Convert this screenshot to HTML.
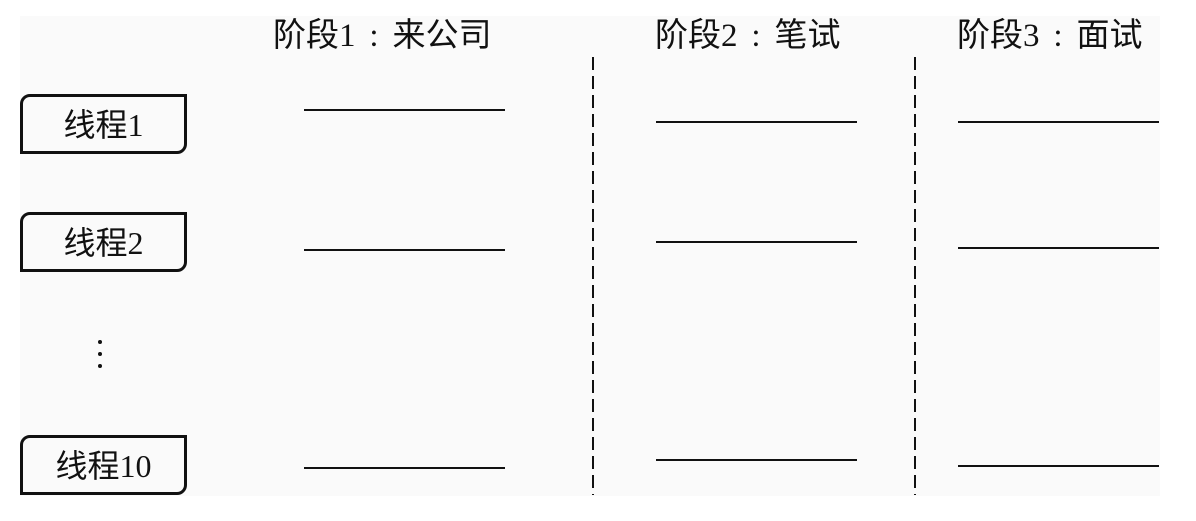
<!DOCTYPE html>
<html><head><meta charset="utf-8"><style>
body{margin:0;width:1196px;height:521px;background:#fff;position:relative;overflow:hidden;font-family:"Liberation Serif","Noto Sans CJK SC",serif;color:#111}
.panel{position:absolute;left:20px;top:16px;width:1140px;height:480px;background:#fafafa}
.h{position:absolute;top:16px;font-size:33px;line-height:40px;white-space:nowrap;font-family:"Liberation Serif","Noto Sans CJK SC",serif}
.c{display:inline-block;width:37px;text-align:center}
.box{position:absolute;left:20px;width:161px;height:54px;border:3px solid #111;border-radius:10px 0 10px 0;font-size:32px;line-height:56px;text-align:center;background:#fafafa}
.ln{position:absolute;height:2px;background:#111;width:201px}
.dash{position:absolute;top:57px;height:438px;width:2px;background:repeating-linear-gradient(to bottom,#111 0 13px,transparent 13px 19px)}
.dot{position:absolute;left:98px;width:4px;height:4px;border-radius:50%;background:#111}
</style></head><body>
<div class="panel"></div>
<div class="h" style="left:273px">阶段1<span class="c">:</span>来公司</div>
<div class="h" style="left:655px">阶段2<span class="c">:</span>笔试</div>
<div class="h" style="left:957px">阶段3<span class="c">:</span>面试</div>
<div class="box" style="top:94px">线程1</div>
<div class="box" style="top:212px">线程2</div>
<div class="box" style="top:435px">线程10</div>
<div class="dot" style="top:340px"></div>
<div class="dot" style="top:352px"></div>
<div class="dot" style="top:364px"></div>
<div class="ln" style="left:304px;top:109px"></div>
<div class="ln" style="left:304px;top:249px"></div>
<div class="ln" style="left:304px;top:467px"></div>
<div class="ln" style="left:656px;top:121px"></div>
<div class="ln" style="left:656px;top:241px"></div>
<div class="ln" style="left:656px;top:459px"></div>
<div class="ln" style="left:958px;top:121px"></div>
<div class="ln" style="left:958px;top:247px"></div>
<div class="ln" style="left:958px;top:465px"></div>
<div class="dash" style="left:592px"></div>
<div class="dash" style="left:914px"></div>
</body></html>
